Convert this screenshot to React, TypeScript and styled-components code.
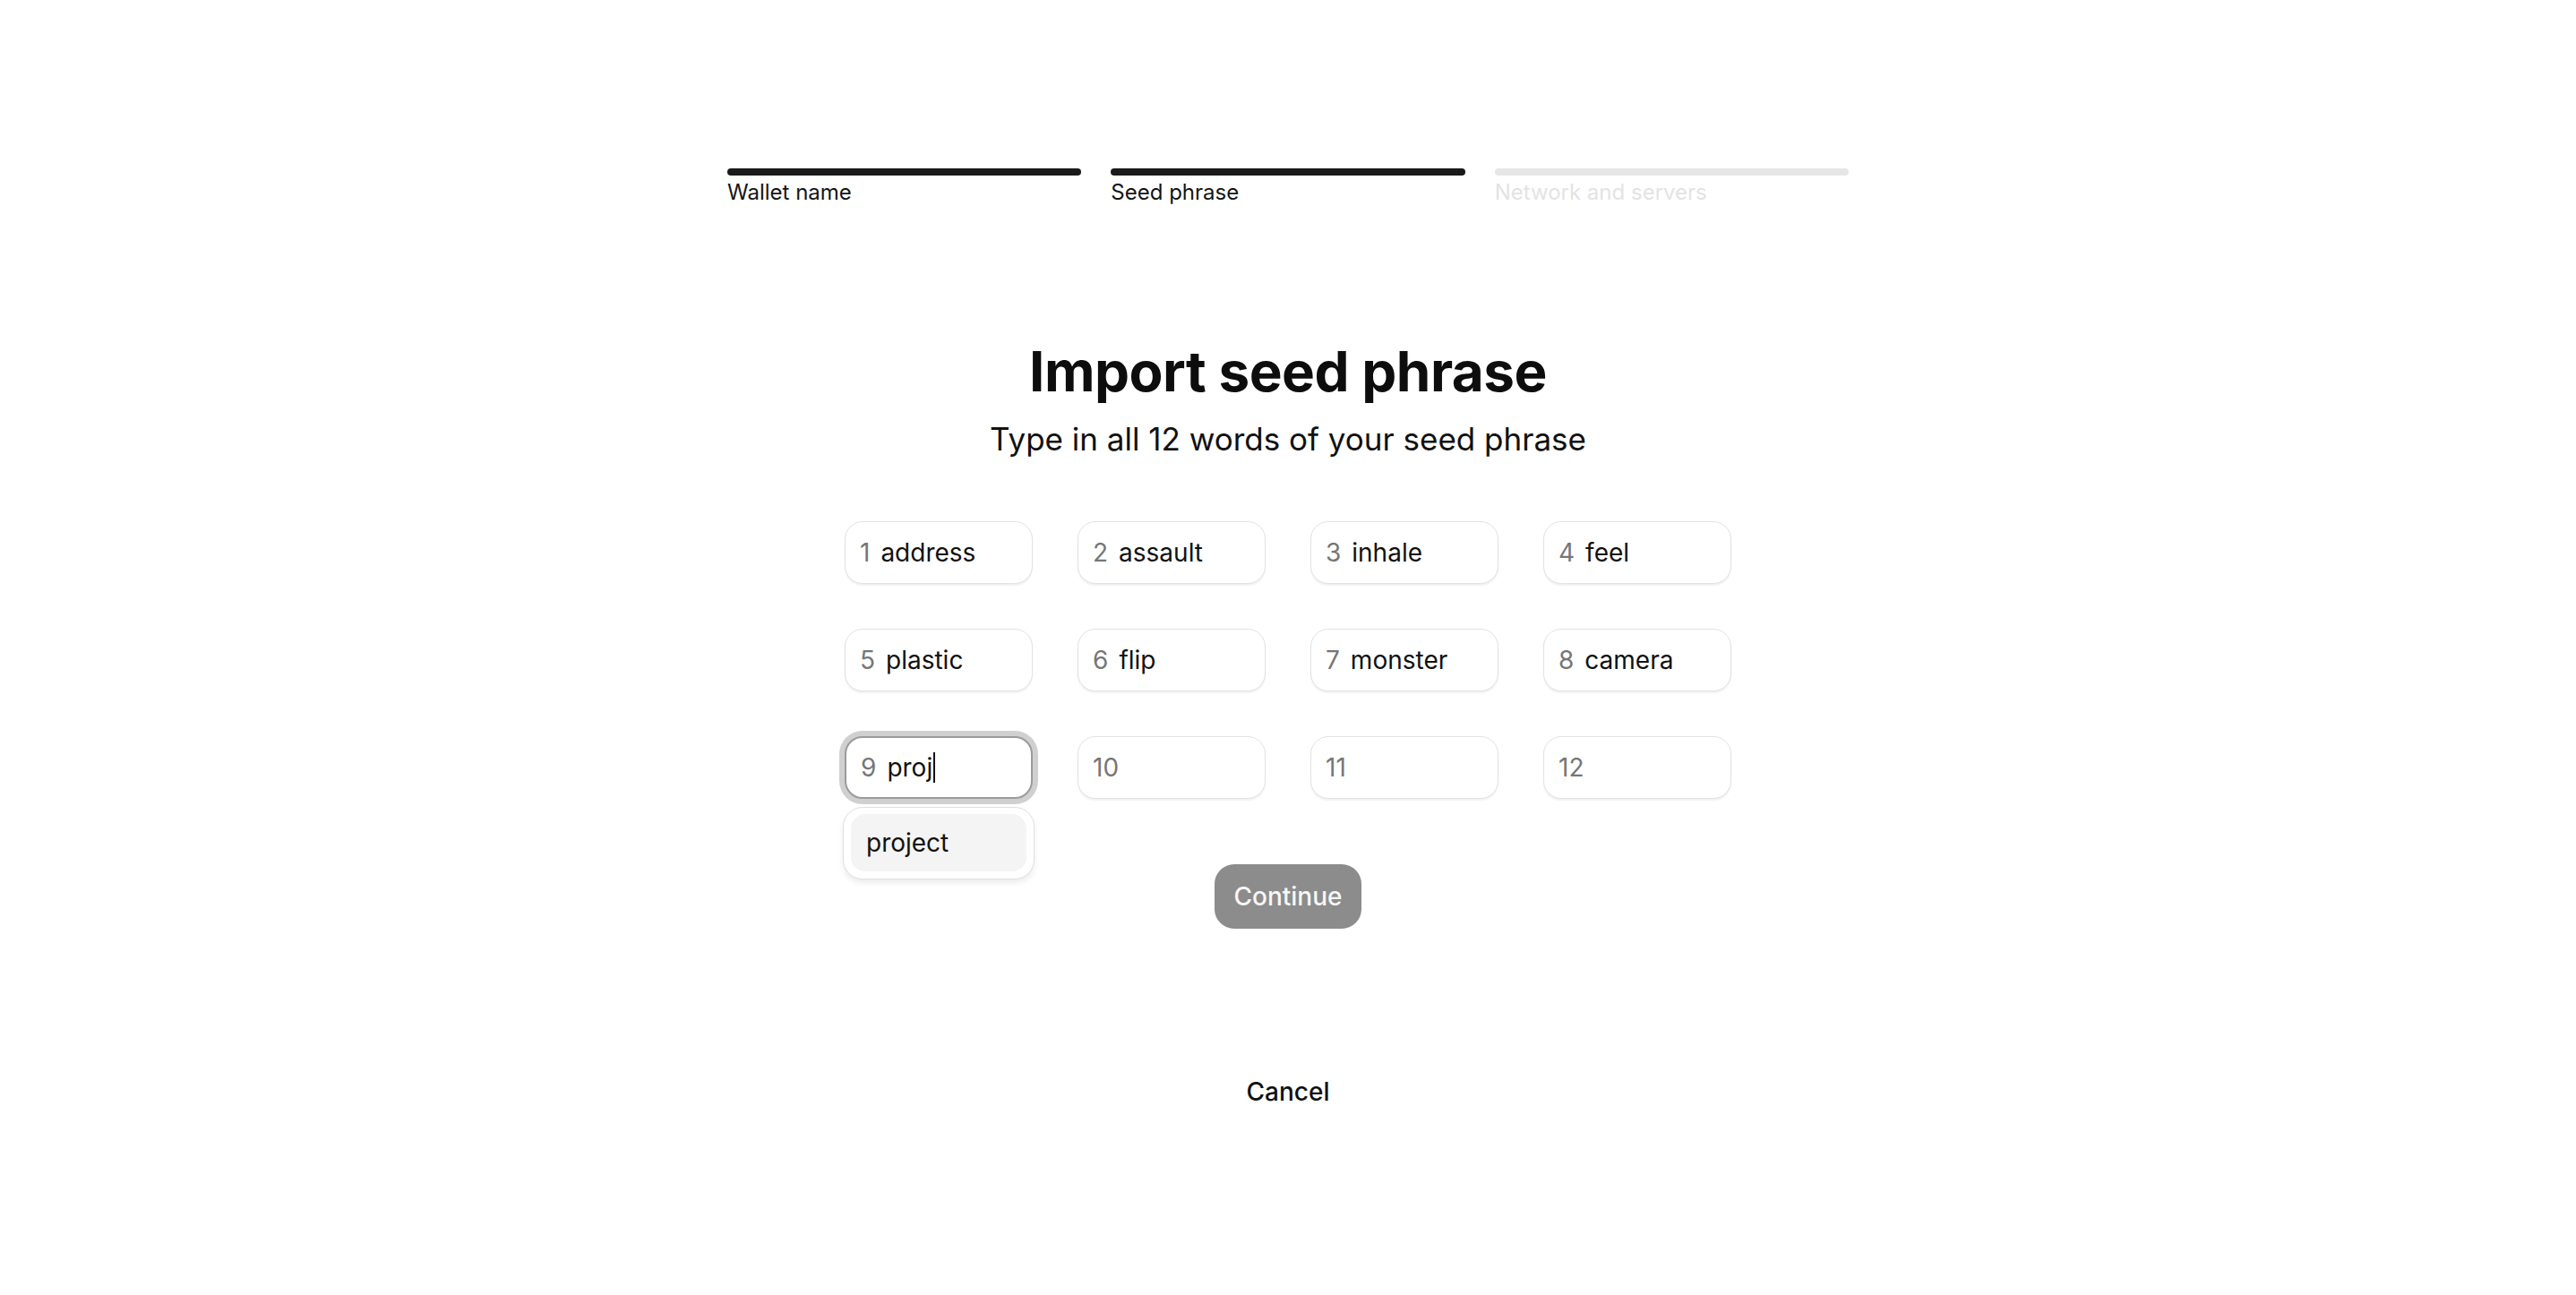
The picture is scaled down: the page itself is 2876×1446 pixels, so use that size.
import React from "react";
import styled, { createGlobalStyle } from "styled-components";

const GlobalStyle = createGlobalStyle`
  html, body {
    margin: 0;
    padding: 0;
    background: #ffffff;
  }
  body {
    font-family: Inter, "Noto Sans", "Liberation Sans", sans-serif;
    color: #111111;
    -webkit-font-smoothing: antialiased;
  }
  * { box-sizing: border-box; }
`;

const Page = styled.main`
  min-height: 1446px;
  display: flex;
  flex-direction: column;
  align-items: center;
  padding-top: 188px;
`;

const Stepper = styled.nav`
  width: 1252px;
  display: grid;
  grid-template-columns: repeat(3, 1fr);
  column-gap: 33px;
`;

const Step = styled.div`
  display: flex;
  flex-direction: column;
  gap: 5px;
`;

const Bar = styled.div<{ $active: boolean }>`
  height: 8px;
  border-radius: 4px;
  background: ${(p) => (p.$active ? "#1a1a1a" : "#e6e6e6")};
`;

const StepLabel = styled.span<{ $active: boolean }>`
  font-size: 24px;
  line-height: 28px;
  color: ${(p) => (p.$active ? "#151515" : "#e3e3e3")};
`;

const Title = styled.h1`
  margin: 147px 0 0;
  font-size: 62px;
  line-height: 78px;
  font-weight: 700;
  letter-spacing: -0.5px;
  color: #0d0d0d;
`;

const Subtitle = styled.p`
  margin: 14px 0 0;
  font-size: 35px;
  line-height: 44px;
  font-weight: 400;
  color: #111111;
`;

const WordGrid = styled.div`
  margin-top: 70px;
  display: grid;
  grid-template-columns: repeat(4, 210px);
  column-gap: 50px;
  row-gap: 50px;
`;

const Cell = styled.div`
  position: relative;
`;

const Field = styled.div<{ $focused?: boolean }>`
  height: 70px;
  display: flex;
  align-items: center;
  gap: 12px;
  padding: 0 16px;
  border-radius: 20px;
  background: #ffffff;
  border: ${(p) => (p.$focused ? "2px solid #9b9b9b" : "1.5px solid #e2e2e2")};
  box-shadow: ${(p) =>
    p.$focused
      ? "0 0 0 6px #d0d0d0"
      : "0 2px 2px rgba(0, 0, 0, 0.06)"};
  font-size: 28px;
  line-height: 34px;
`;

const Num = styled.span`
  color: #767676;
`;

const Word = styled.span`
  color: #111111;
  display: inline-flex;
  align-items: center;
`;

const Caret = styled.span`
  display: inline-block;
  width: 2px;
  height: 34px;
  margin-left: 1px;
  background: #111111;
`;

const Suggestions = styled.ul`
  position: absolute;
  top: 79px;
  left: -2px;
  right: -2px;
  margin: 0;
  padding: 7px 8px 8px;
  list-style: none;
  background: #ffffff;
  border: 1.5px solid #e0e0e0;
  border-radius: 22px;
  box-shadow: 0 4px 6px rgba(0, 0, 0, 0.08);
  z-index: 2;
`;

const Suggestion = styled.li`
  height: 64px;
  display: flex;
  align-items: center;
  padding: 0 17px;
  border-radius: 16px;
  background: #f4f4f4;
  font-size: 28px;
  color: #111111;
`;

const ContinueButton = styled.button`
  margin-top: 73px;
  height: 72px;
  padding: 0 21px;
  border: none;
  border-radius: 22px;
  background: #8c8c8c;
  color: #f7f7f7;
  font-family: inherit;
  font-size: 28px;
  font-weight: 500;
  cursor: default;
`;

const CancelButton = styled.button`
  margin-top: 164px;
  border: none;
  background: transparent;
  padding: 0;
  font-family: inherit;
  font-size: 28px;
  line-height: 36px;
  font-weight: 500;
  color: #111111;
`;

const steps = [
  { label: "Wallet name", active: true },
  { label: "Seed phrase", active: true },
  { label: "Network and servers", active: false },
];

const words = [
  "address",
  "assault",
  "inhale",
  "feel",
  "plastic",
  "flip",
  "monster",
  "camera",
  "proj",
  "",
  "",
  "",
];

export default function App() {
  return (
    <>
      <GlobalStyle />
      <Page>
        <Stepper>
          {steps.map((s) => (
            <Step key={s.label}>
              <Bar $active={s.active} />
              <StepLabel $active={s.active}>{s.label}</StepLabel>
            </Step>
          ))}
        </Stepper>
        <Title>Import seed phrase</Title>
        <Subtitle>Type in all 12 words of your seed phrase</Subtitle>
        <WordGrid>
          {words.map((w, i) => {
            const focused = i === 8;
            return (
              <Cell key={i}>
                <Field $focused={focused}>
                  <Num>{i + 1}</Num>
                  <Word>
                    {w}
                    {focused && <Caret />}
                  </Word>
                </Field>
                {focused && (
                  <Suggestions>
                    <Suggestion>project</Suggestion>
                  </Suggestions>
                )}
              </Cell>
            );
          })}
        </WordGrid>
        <ContinueButton type="button">Continue</ContinueButton>
        <CancelButton type="button">Cancel</CancelButton>
      </Page>
    </>
  );
}
